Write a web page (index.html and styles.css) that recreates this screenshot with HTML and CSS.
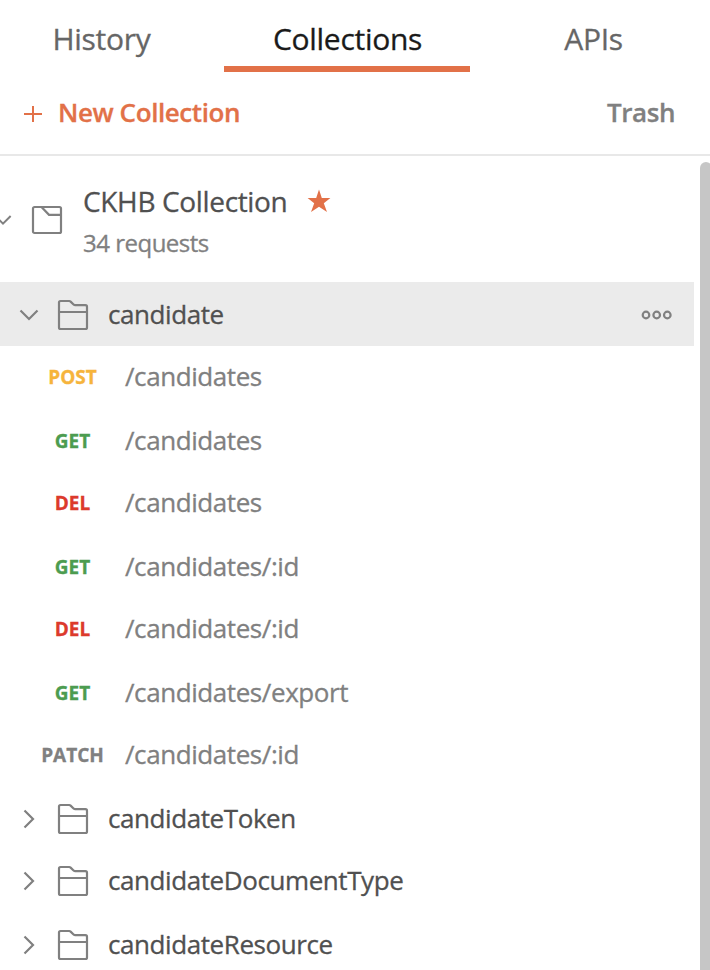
FILE: index.html
```html
<!DOCTYPE html>
<html lang="en">
<head>
  <meta charset="utf-8">
  <title>Collections</title>
  <link rel="stylesheet" href="styles.css">
</head>
<body>
  <!-- shared icons -->
  <svg class="sprite">
    <symbol id="folder" viewBox="0 0 32 32">
      <path d="M2 28.500V3.500Q2 2 3.500 2H12.200Q13 2 13.600 2.600L16.800 5.700Q17.400 6.200 18.200 6.200H28.500Q30 6.200 30 7.700V28.500Q30 30 28.500 30H3.500Q2 30 2 28.500ZM2 13H30"/>
    </symbol>
    <symbol id="collection" viewBox="0 0 32 30">
      <rect x="2" y="2" width="28" height="26" rx="1.500"/>
      <path d="M10.500 2L18 9.800H30"/>
    </symbol>
    <symbol id="down" viewBox="0 0 20 12">
      <path d="M1.500 1.500L10 10L18.500 1.500"/>
    </symbol>
    <symbol id="right" viewBox="0 0 12 20">
      <path d="M1.500 1.500L10 10L1.500 18.500"/>
    </symbol>
  </svg>

  <div class="tabs">
    <div class="tab">History</div>
    <div class="tab active">Collections</div>
    <div class="tab">APIs</div>
  </div>

  <div class="toolbar">
    <svg class="plus" viewBox="0 0 18 18"><path d="M9 1V17M0 9H18"/></svg>
    <span class="new">New Collection</span>
    <span class="trash">Trash</span>
  </div>

  <div class="content">
    <div class="list">
      <div class="collection">
        <svg class="icon check"><use href="#down"/></svg>
        <svg class="icon collection-icon"><use href="#collection"/></svg>
        <div class="info">
          <div class="title">
            <span>CKHB Collection</span>
            <svg class="star" viewBox="0 0 24 24"><path d="M12 0.500L14.800 9H23.400L16.800 14.300L20 23L12 17.800L4 23L7.200 14.300L0.600 9H9.200Z"/></svg>
          </div>
          <div class="count">34 requests</div>
        </div>
      </div>

      <div class="row folder selected">
        <div class="arrow"><svg class="icon down"><use href="#down"/></svg></div>
        <svg class="icon folder-icon"><use href="#folder"/></svg>
        <span class="name">candidate</span>
        <svg class="icon more" viewBox="0 0 32 10"><circle cx="5" cy="5" r="3.300"/><circle cx="15.700" cy="5" r="3.300"/><circle cx="26.300" cy="5" r="3.300"/></svg>
      </div>

      <div class="row request tall"><span class="method post">POST</span><span class="path">/candidates</span></div>
      <div class="row request"><span class="method get">GET</span><span class="path">/candidates</span></div>
      <div class="row request tall"><span class="method del">DEL</span><span class="path">/candidates</span></div>
      <div class="row request"><span class="method get">GET</span><span class="path">/candidates/:id</span></div>
      <div class="row request tall"><span class="method del">DEL</span><span class="path">/candidates/:id</span></div>
      <div class="row request"><span class="method get">GET</span><span class="path">/candidates/export</span></div>
      <div class="row request tall"><span class="method patch">PATCH</span><span class="path">/candidates/:id</span></div>

      <div class="row folder">
        <div class="arrow"><svg class="icon right"><use href="#right"/></svg></div>
        <svg class="icon folder-icon"><use href="#folder"/></svg>
        <span class="name">candidateToken</span>
      </div>
      <div class="row folder tall">
        <div class="arrow"><svg class="icon right"><use href="#right"/></svg></div>
        <svg class="icon folder-icon"><use href="#folder"/></svg>
        <span class="name">candidateDocumentType</span>
      </div>
      <div class="row folder">
        <div class="arrow"><svg class="icon right"><use href="#right"/></svg></div>
        <svg class="icon folder-icon"><use href="#folder"/></svg>
        <span class="name">candidateResource</span>
      </div>
    </div>
    <div class="scrollbar"></div>
  </div>
</body>
</html>
```

FILE: styles.css
```css
* {
  box-sizing: border-box;
}

body {
  margin: 0;
  height: 970px;
  overflow: hidden;
  display: flex;
  flex-direction: column;
  background: #fff;
  font-family: "Open Sans", sans-serif;
  letter-spacing: -0.42px;
  -webkit-text-stroke: 0.3px;
  color: #505050;
}

svg {
  display: block;
  flex: none;
}

.sprite {
  display: none;
}

.icon {
  fill: none;
  stroke: #808080;
  stroke-width: 2.2;
}

/* tabs */
.tabs {
  display: flex;
  flex: none;
  width: 738px;
  height: 72px;
  margin-left: -22px;
}

.tab {
  width: 246px;
  padding: 19px 0 0 1px;
  font-size: 30px;
  line-height: 40px;
  letter-spacing: -0.3px;
  text-align: center;
  color: #666;
}

.tab.active {
  color: #1a1a1a;
  border-bottom: 6px solid #e27148;
}

/* toolbar */
.toolbar {
  display: flex;
  flex: none;
  align-items: center;
  height: 84px;
  padding: 0 35px 0 24px;
  border-bottom: 2px solid #e8e8e8;
  font-size: 26px;
  font-weight: 600;
}

.plus {
  width: 18px;
  height: 18px;
  margin-top: 1px;
  fill: none;
  stroke: #e27148;
  stroke-width: 2;
}

.new,
.trash {
  padding-bottom: 2px;
}

.new {
  margin-left: 16px;
  color: #e27148;
}

.trash {
  margin-left: auto;
  color: #808080;
}

/* list */
.content {
  display: flex;
  flex: 1;
  min-height: 0;
}

.list {
  flex: none;
  width: 694px;
}

.collection {
  display: flex;
  height: 126px;
}

.check {
  width: 18px;
  height: 12px;
  margin: 58px 0 0 -6px;
}

.collection-icon {
  width: 32px;
  height: 30px;
  margin: 49px 0 0 19px;
}

.info {
  margin: 26px 0 0 20px;
}

.title {
  display: flex;
  align-items: center;
  height: 38px;
  font-size: 28px;
  letter-spacing: -0.35px;
}

.star {
  width: 24px;
  height: 24px;
  margin-left: 20px;
  fill: #e27148;
}

.count {
  height: 44px;
  font-size: 24px;
  line-height: 46px;
  letter-spacing: -0.5px;
  color: #808080;
}

.row {
  display: flex;
  align-items: center;
  height: 62px;
  font-size: 26px;
}

.row.tall {
  height: 64px;
  padding-bottom: 2px;
}

.row.selected {
  height: 64px;
  padding-top: 2px;
  background: #ebebeb;
}

.arrow {
  display: flex;
  justify-content: center;
  width: 58px;
}

.down {
  width: 20px;
  height: 12px;
}

.right {
  width: 12px;
  height: 20px;
}

.folder-icon {
  width: 32px;
  height: 32px;
  margin-left: -1px;
}

.name,
.path {
  padding-bottom: 2px;
}

.name {
  margin-left: 19px;
}

.more {
  width: 32px;
  height: 10px;
  margin: 0 21px 0 auto;
}

.method {
  width: 81px;
  margin-left: 32px;
  font-size: 19px;
  font-weight: 700;
  letter-spacing: 0;
  text-align: center;
}

.path {
  margin-left: 12px;
  color: #808080;
}

.post {
  color: #f6b43c;
}

.get {
  color: #4c9c50;
}

.del {
  color: #dc3a2c;
}

.patch {
  color: #808080;
}

.scrollbar {
  flex: none;
  width: 12px;
  margin: 6px 0 -10px 6px;
  border-radius: 6px;
  background: #c6c6c6;
}
```
